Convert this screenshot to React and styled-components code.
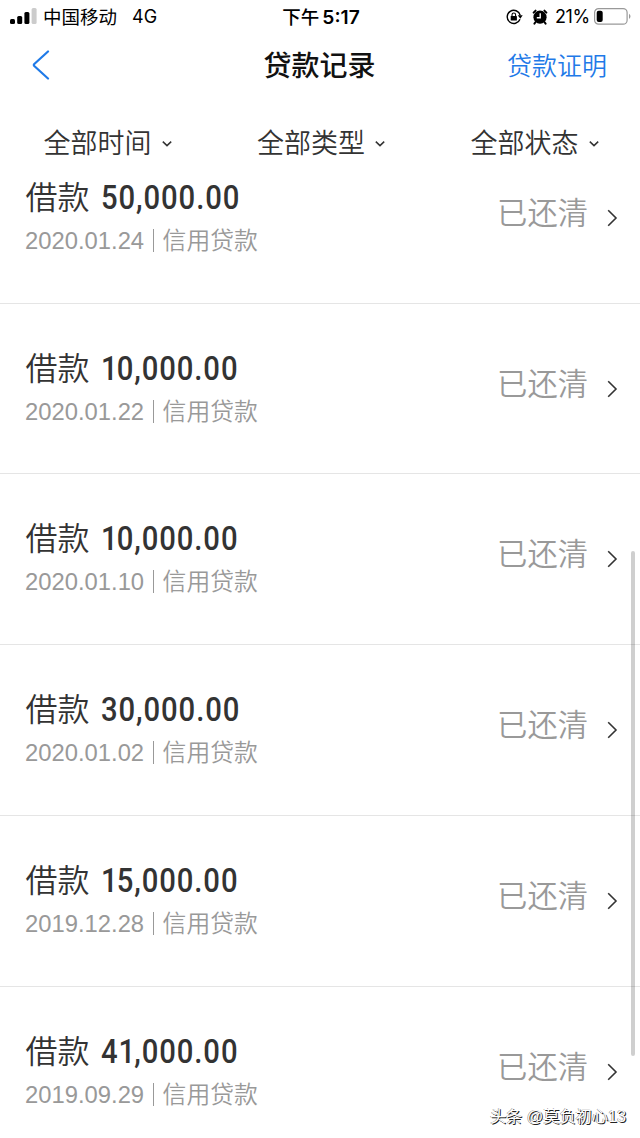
import React from "react";
import styled, { createGlobalStyle } from "styled-components";

const GlobalStyle = createGlobalStyle`
  * {
    box-sizing: border-box;
  }
  body {
    margin: 0;
    background: #fff;
  }
`;

const Page = styled.main`
  position: relative;
  display: flex;
  flex-direction: column;
  width: 640px;
  height: 1138px;
  overflow: hidden;
  background: #fff;
  color: #333;
  font-family: "Liberation Sans", "Noto Sans CJK SC", sans-serif;
  white-space: nowrap;
`;

const StatusBar = styled.header`
  display: grid;
  grid-template-columns: 1fr 90px 1fr;
  align-items: center;
  height: 32px;
  padding: 0 8px 0 10px;
  color: #000;
  font-family: Inter, "Noto Sans CJK SC", sans-serif;
  font-size: 18.5px;
  line-height: 32px;
`;
const Carrier = styled.div`
  display: flex;
  align-items: center;

  svg {
    margin-right: 6px;
  }
  .network {
    margin-left: 15px;
    font-size: 18px;
  }
`;
const Clock = styled.div`
  padding-top: 1px;
  text-align: center;
  font-size: 18.5px;
  font-weight: 500;

  b {
    margin-left: 3px;
    font-size: 19.2px;
    font-weight: 600;
  }
`;
const Battery = styled.div`
  display: flex;
  align-items: center;
  justify-content: flex-end;

  .alarm {
    margin-left: 9px;
  }
  .percent {
    margin: 0 4px 0 7px;
    padding-top: 1px;
    font-size: 18px;
    letter-spacing: -0.3px;
  }
`;

const NavBar = styled.nav`
  display: grid;
  grid-template-columns: 1fr 140px 1fr;
  align-items: center;
  height: 66px;
  padding: 0 33px 0 32px;
`;
const BackButton = styled.button`
  display: flex;
  padding: 0;
  border: 0;
  background: none;
`;
const NavTitle = styled.h1`
  margin: 0;
  padding-top: 4px;
  color: #111;
  text-align: center;
  font-size: 28px;
  font-weight: 500;
  line-height: 40px;
`;
const NavLink = styled.a`
  padding-top: 1px;
  color: #1f7ae8;
  text-align: right;
  font-size: 25px;
  font-weight: 350;
  line-height: 40px;
`;

const FilterBar = styled.div`
  display: grid;
  grid-template-columns: repeat(3, 213.5px);
  height: 74px;
  padding-top: 26px;
`;
const Filter = styled.div`
  display: flex;
  align-items: center;
  height: 40px;
  padding-left: 43.5px;
  font-size: 27px;
  font-weight: 350;
  line-height: 40px;

  svg {
    margin: -1px 0 0 10px;
  }
`;

/* the list is scrolled, so the first row slides under the filters */
const List = styled.section`
  flex: 1;
  overflow: hidden;

  > :first-child {
    margin-top: -39.25px;
  }
`;
const Row = styled.article`
  display: flex;
  justify-content: space-between;
  height: 170.75px;
  padding: 42px 22px 0 25px;
  border-bottom: 1px solid #e5e5e5;
`;
const Title = styled.div`
  display: flex;
  height: 46px;
  padding-left: 0.5px;
  font-size: 32px;
  font-weight: 350;
  line-height: 46px;
`;
const Amount = styled.span`
  margin-left: 11px;
  font-family: Roboto, sans-serif;
  font-size: 32.5px;
  font-weight: 500;
  letter-spacing: 1px;
  line-height: 46px;
  transform: scaleX(0.9);
  transform-origin: left;

  .one {
    margin: 0 -2px 0 -2px;
  }
  .one:first-child {
    margin-left: 0;
  }
`;
const Meta = styled.div`
  display: flex;
  height: 40px;
  color: #999;
  font-size: 23.8px;
  font-weight: 350;
  line-height: 40px;
`;
const Divider = styled.i`
  width: 1px;
  height: 23px;
  margin: 8px 9px 0 8.5px;
  background: #999;
`;
const State = styled.div`
  display: flex;
  align-items: center;
  height: 44px;
  margin-top: 17px;
  color: #999;
  font-size: 30.3px;
  font-weight: 350;
  line-height: 44px;

  svg {
    margin: 8px 0 0 19px;
  }
`;

const ScrollThumb = styled.div`
  position: absolute;
  top: 551px;
  right: 5px;
  width: 4px;
  height: 505px;
  border-radius: 2px;
  background: rgba(0, 0, 0, 0.19);
`;
const Watermark = styled.div`
  position: absolute;
  right: 14px;
  bottom: 8px;
  color: #fff;
  font-size: 16.2px;
  line-height: 28px;
  text-shadow: 1px 1px 0 #222, -0.5px -0.5px 0 #777;
`;

const records = [
  { amount: "50,000.00", date: "2020.01.24" },
  { amount: "10,000.00", date: "2020.01.22" },
  { amount: "10,000.00", date: "2020.01.10" },
  { amount: "30,000.00", date: "2020.01.02" },
  { amount: "15,000.00", date: "2019.12.28" },
  { amount: "41,000.00", date: "2019.09.29" },
];

const SignalIcon = () => (
  <svg width="27" height="17" viewBox="0 0 27 17">
    <rect x="0" y="11" width="5" height="5" rx="1.5" />
    <rect x="7.2" y="8" width="5" height="8" rx="1.5" />
    <rect x="14.4" y="4" width="5" height="12" rx="1.5" />
    <rect x="21.6" y="0" width="5" height="16" rx="1.5" fill="#ccc" />
  </svg>
);

const RotationLockIcon = () => (
  <svg width="17" height="16" viewBox="0 0 17 16">
    <path d="M14 10.2A6.6 6.6 0 1 1 14.2 6.2" fill="none" stroke="#000" strokeWidth="1.4" />
    <path d="M11.8 6.3h4.9l-2.4 3.5z" />
    <rect x="4.7" y="7" width="6.2" height="4.5" rx="0.6" />
    <path d="M6 7.2V5.8a1.8 1.8 0 0 1 3.6 0v1.4" fill="none" stroke="#000" strokeWidth="1.1" />
  </svg>
);

const AlarmIcon = () => (
  <svg className="alarm" width="16" height="16" viewBox="0 0 16 16">
    <circle cx="8" cy="8.2" r="6.6" />
    <path d="M1.6 3.6L3.6 1.6M14.4 3.6L12.4 1.6M3.6 13l-1.2 1.6M12.4 13l1.2 1.6" stroke="#000" strokeWidth="2" strokeLinecap="round" />
    <path d="M8.2 4.2v4.5H4.8" fill="none" stroke="#fff" strokeWidth="1.4" />
  </svg>
);

const BatteryIcon = () => (
  <svg width="38" height="17" viewBox="0 0 38 17">
    <rect x="0.6" y="0.6" width="32.5" height="15.6" rx="4" fill="none" stroke="#999" strokeWidth="1.2" />
    <rect x="2.7" y="2.7" width="6" height="11.4" rx="2" />
    <path d="M35 5.8q3 2.6 0 5.2z" fill="#999" />
  </svg>
);

const ArrowDown = () => (
  <svg width="10" height="8" viewBox="0 0 10 8">
    <path d="M0.8 1.6L5 5.6L9.2 1.6" fill="none" stroke="#333" strokeWidth="1.5" />
  </svg>
);

const ArrowRight = () => (
  <svg width="11" height="18" viewBox="0 0 11 18">
    <path d="M1.2 1.2L9 9L1.2 16.8" fill="none" stroke="#333" strokeWidth="1.6" />
  </svg>
);

const App = () => {
  return (
    <>
      <GlobalStyle />
      <Page>
        <StatusBar>
          <Carrier>
            <SignalIcon />
            中国移动
            <span className="network">4G</span>
          </Carrier>
          <Clock>下午<b>5:17</b></Clock>
          <Battery>
            <RotationLockIcon />
            <AlarmIcon />
            <span className="percent">21%</span>
            <BatteryIcon />
          </Battery>
        </StatusBar>

        <NavBar>
          <BackButton aria-label="返回">
            <svg width="18" height="30" viewBox="0 0 18 30">
              <path d="M16 1.5L2.3 14q-1 1 0 2L16 28.5" fill="none" stroke="#1f7ae8" strokeWidth="2.2" strokeLinecap="round" />
            </svg>
          </BackButton>
          <NavTitle>贷款记录</NavTitle>
          <NavLink>贷款证明</NavLink>
        </NavBar>

        <FilterBar>
          {["全部时间", "全部类型", "全部状态"].map((name) => (
            <Filter key={name}>
              {name}
              <ArrowDown />
            </Filter>
          ))}
        </FilterBar>

        <List>
          {records.map(({ amount, date }) => (
            <Row key={date}>
              <div>
                <Title>
                  借款
                  <Amount>
                    {amount.split("").map((char, i) => (
                      char === "1" ? <span className="one" key={i}>1</span> : char
                    ))}
                  </Amount>
                </Title>
                <Meta>
                  {date}
                  <Divider />
                  信用贷款
                </Meta>
              </div>
              <State>
                已还清
                <ArrowRight />
              </State>
            </Row>
          ))}
        </List>

        <ScrollThumb />
        <Watermark>头条 @莫负初心13</Watermark>
      </Page>
    </>
  );
};

export default App;
